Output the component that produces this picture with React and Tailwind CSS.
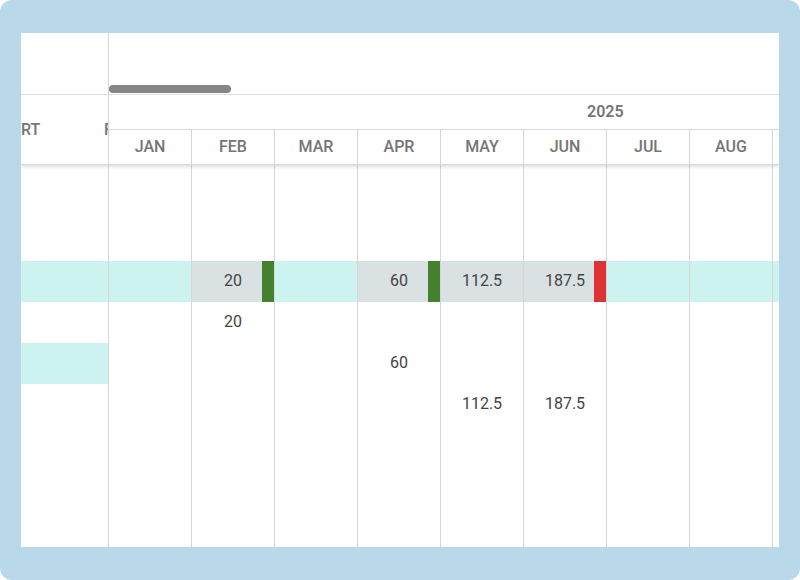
import React from 'react';

const months = ['JAN', 'FEB', 'MAR', 'APR', 'MAY', 'JUN', 'JUL', 'AUG', 'SEP'];

const rows = [
  { h: 'h-[96px]', left: false, cells: {} },
  {
    h: 'h-[41px]',
    left: true,
    band: true,
    cells: {
      FEB: { v: '20', bar: 'bg-[#43812e]' },
      APR: { v: '60', bar: 'bg-[#43812e]' },
      MAY: { v: '112.5' },
      JUN: { v: '187.5', bar: 'bg-[#dd3333]' },
    },
  },
  { h: 'h-[41px]', left: false, cells: { FEB: { v: '20', plain: true } } },
  { h: 'h-[41px]', left: true, cells: { APR: { v: '60', plain: true } } },
  { h: 'h-[41px]', left: false, cells: { MAY: { v: '112.5', plain: true }, JUN: { v: '187.5', plain: true } } },
  { h: 'flex-1', left: false, cells: {} },
];

const Cell = ({ data, band }) => {
  const gray = data && !data.plain;
  return (
    <div
      className={
        'relative w-[83px] shrink-0 border-r border-[#d6d6d6] flex items-center justify-center ' +
        (gray ? 'bg-[#dae1e2]' : band ? 'bg-[#ccf3ef]' : 'bg-white')
      }
    >
      {data && <span className="text-[16px] text-[#444] pb-[1px]">{data.v}</span>}
      {data && data.bar && <div className={'absolute right-0 top-0 bottom-0 w-[12px] ' + data.bar} />}
    </div>
  );
};

const App = () => {
  return (
    <div className="w-[800px] h-[580px] bg-white">
      <div className="w-[800px] h-[580px] rounded-xl bg-[#b9d8e9] px-[21px] py-[33px]" style={{ fontFamily: 'Roboto, "Liberation Sans", sans-serif' }}>
        <div className="w-[758px] h-[514px] bg-white flex flex-col overflow-hidden">
          {/* scroll strip */}
          <div className="flex h-[62px] shrink-0 border-b border-[#e0e0e0]">
            <div className="w-[88px] shrink-0 border-r border-[#d6d6d6]" />
            <div className="flex-1 flex items-end pb-[1px]">
              <div className="w-[122px] h-[8px] rounded-full bg-[#858585]" />
            </div>
          </div>

          {/* header */}
          <div className="flex h-[70px] shrink-0 border-b border-[#d9d9d9] shadow-[0_2px_3px_rgba(0,0,0,0.12)] relative z-10">
            <div className="w-[88px] shrink-0 border-r border-[#d6d6d6] relative overflow-hidden flex items-center">
              <span className="text-[16px] font-medium text-[#757575]">RT</span>
              <span className="absolute left-[83px] text-[16px] font-medium text-[#757575]">F</span>
            </div>
            <div className="flex-1 flex flex-col overflow-hidden">
              <div className="h-[35px] border-b border-[#d9d9d9] flex items-center pl-[478px]">
                <span className="text-[16px] font-semibold text-[#757575]">2025</span>
              </div>
              <div className="flex-1 flex">
                {months.map((m) => (
                  <div key={m} className="w-[83px] shrink-0 border-r border-[#d6d6d6] flex items-center justify-center">
                    <span className="text-[16px] font-medium text-[#757575]">{m}</span>
                  </div>
                ))}
              </div>
            </div>
          </div>

          {/* body */}
          {rows.map((r, i) => (
            <div key={i} className={'flex shrink-0 ' + r.h}>
              <div className={'w-[88px] shrink-0 border-r border-[#d6d6d6] ' + (r.left ? 'bg-[#ccf3ef]' : 'bg-white')} />
              <div className={'flex-1 flex overflow-hidden ' + (r.band ? 'bg-[#ccf3ef]' : '')}>
                {months.map((m) => (
                  <Cell key={m} data={r.cells[m]} band={r.band} />
                ))}
              </div>
            </div>
          ))}
        </div>
      </div>
    </div>
  );
};

export default App;
